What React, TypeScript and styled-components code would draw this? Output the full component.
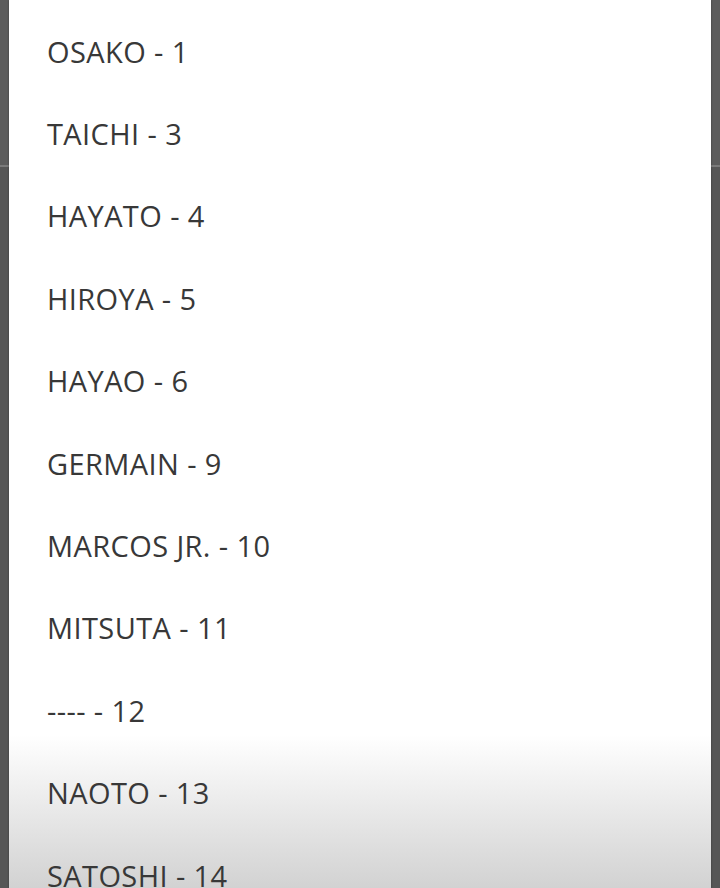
import React from 'react';
import styled, { createGlobalStyle } from 'styled-components';

const GlobalStyle = createGlobalStyle`
  html, body {
    margin: 0;
    height: 100%;
    overflow: hidden;
  }
  body {
    background: linear-gradient(
      to bottom,
      #5c5c5c 0,
      #5c5c5c 165px,
      #7a7a7a 165px,
      #7a7a7a 167px,
      #565656 167px
    );
    font-family: 'Open Sans', 'Noto Sans', sans-serif;
  }
`;

const Overlay = styled.div`
  display: flex;
  height: 888px;
  padding: 0 9px;
  box-sizing: border-box;
`;

const Sheet = styled.ul`
  flex: 1;
  margin: 0;
  padding: 10px 0 0;
  list-style: none;
  background: linear-gradient(to bottom, #fff 0, #fff 735px, #d2d2d2 888px);
  box-shadow: 0 0 2px rgba(0, 0, 0, 0.35);
  overflow: hidden;
`;

const Option = styled.li`
  display: flex;
  align-items: center;
  height: 82.4px;
  padding-left: 38px;
  color: #383838;
  font-size: 29px;
  letter-spacing: 0.4px;
  white-space: nowrap;
`;

const players = [
  { name: 'OSAKO', num: 1 },
  { name: 'TAICHI', num: 3 },
  { name: 'HAYATO', num: 4 },
  { name: 'HIROYA', num: 5 },
  { name: 'HAYAO', num: 6 },
  { name: 'GERMAIN', num: 9 },
  { name: 'MARCOS JR.', num: 10 },
  { name: 'MITSUTA', num: 11 },
  { name: '----', num: 12 },
  { name: 'NAOTO', num: 13 },
  { name: 'SATOSHI', num: 14 },
];

const App = () => (
  <>
    <GlobalStyle />
    <Overlay>
      <Sheet>
        {players.map(({ name, num }) => (
          <Option key={num}>{`${name} - ${num}`}</Option>
        ))}
      </Sheet>
    </Overlay>
  </>
);

export default App;
